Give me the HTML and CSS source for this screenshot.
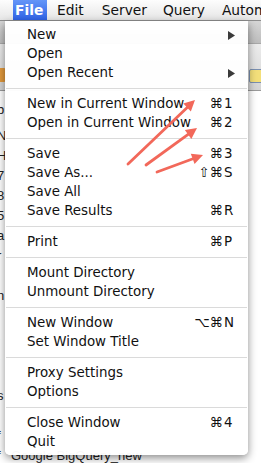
FILE: index.html
```html
<!DOCTYPE html>
<html>
<head>
<meta charset="utf-8">
<link rel="stylesheet" href="styles.css">
</head>
<body>
<div class="screen">
  <div class="menubar">
    <span class="mtitle active">File</span>
    <span class="mtitle edit">Edit</span>
    <span class="mtitle server">Server</span>
    <span class="mtitle query">Query</span>
    <span class="mtitle autom">Automation</span>
  </div>
  <div class="window">
    <div class="toolbar">
      <div class="tb-top"></div>
      <div class="tb-main">
        <div class="tb-icon"></div>
        <div class="tb-folder"></div>
      </div>
    </div>
    <div class="list">
      <div class="lrow head"><span class="frag">b</span></div>
      <div class="lrow"><span class="frag">N</span></div>
      <div class="lrow"><span class="frag">H</span></div>
      <div class="lrow"><span class="frag">7</span></div>
      <div class="lrow"><span class="frag">8</span></div>
      <div class="lrow"><span class="frag">5</span></div>
      <div class="lrow"><span class="frag">a</span></div>
      <div class="lrow"><span class="frag">r</span></div>
      <div class="lrow"><span class="frag"></span></div>
      <div class="lrow"><span class="frag">n</span></div>
      <div class="lrow"><span class="frag"></span></div>
      <div class="lrow"><span class="frag">.</span></div>
      <div class="lrow"><span class="frag">.</span></div>
      <div class="lrow"><span class="frag"></span></div>
      <div class="lrow"><span class="frag">s</span></div>
      <div class="lrow"><span class="frag"></span></div>
      <div class="lrow"><span class="frag">f</span></div>
      <div class="lrow last"><span class="frag">f</span><span class="ltext">Google BigQuery_new</span></div>
    </div>
  </div>

  <div class="menu">
    <div class="item"><span class="label">New</span><svg class="sub" width="7" height="9" viewBox="0 0 7 9"><polygon points="0,0 7,4.5 0,9"/></svg></div>
    <div class="item"><span class="label">Open</span></div>
    <div class="item"><span class="label">Open Recent</span><svg class="sub" width="7" height="9" viewBox="0 0 7 9"><polygon points="0,0 7,4.5 0,9"/></svg></div>
    <div class="sep"></div>
    <div class="item"><span class="label">New in Current Window</span><span class="sc"><span class="mods">⌘</span><span class="key">1</span></span></div>
    <div class="item"><span class="label">Open in Current Window</span><span class="sc"><span class="mods">⌘</span><span class="key">2</span></span></div>
    <div class="sep"></div>
    <div class="item"><span class="label">Save</span><span class="sc"><span class="mods">⌘</span><span class="key">3</span></span></div>
    <div class="item"><span class="label">Save As...</span><span class="sc"><span class="mods">⇧⌘</span><span class="key">S</span></span></div>
    <div class="item"><span class="label">Save All</span></div>
    <div class="item"><span class="label">Save Results</span><span class="sc"><span class="mods">⌘</span><span class="key">R</span></span></div>
    <div class="sep"></div>
    <div class="item"><span class="label">Print</span><span class="sc"><span class="mods">⌘</span><span class="key">P</span></span></div>
    <div class="sep"></div>
    <div class="item"><span class="label">Mount Directory</span></div>
    <div class="item"><span class="label">Unmount Directory</span></div>
    <div class="sep"></div>
    <div class="item"><span class="label">New Window</span><span class="sc"><span class="mods">⌥⌘</span><span class="key">N</span></span></div>
    <div class="item"><span class="label">Set Window Title</span></div>
    <div class="sep"></div>
    <div class="item"><span class="label">Proxy Settings</span></div>
    <div class="item"><span class="label">Options</span></div>
    <div class="sep"></div>
    <div class="item"><span class="label">Close Window</span><span class="sc"><span class="mods">⌘</span><span class="key">4</span></span></div>
    <div class="item"><span class="label">Quit</span></div>
  </div>

  <svg class="arrows" width="261" height="463" viewBox="0 0 261 463">
    <g stroke="#f2685a" stroke-width="2.8" stroke-linecap="round" fill="none">
      <line x1="128" y1="164" x2="187.5" y2="107.2"/>
      <line x1="146" y1="165" x2="188.5" y2="134.2"/>
      <line x1="157" y1="172" x2="193" y2="158.7"/>
    </g>
    <g fill="#f2685a">
      <polygon points="195,100 190.84,111.58 183.24,103.62"/>
      <polygon points="197,128 191.33,138.91 184.87,130.01"/>
      <polygon points="203,155 194.59,163.97 190.77,153.65"/>
    </g>
  </svg>
</div>
</body>
</html>
```

FILE: styles.css
```css
html, body {
  margin: 0;
  padding: 0;
}
body {
  width: 261px;
  height: 463px;
  overflow: hidden;
  background: #ffffff;
  font-family: "DejaVu Sans", "Liberation Sans", sans-serif;
}
.screen {
  position: relative;
  width: 261px;
  height: 463px;
  overflow: hidden;
}

/* menu bar */
.menubar {
  height: 20px;
  border-bottom: 1px solid #8e8e8e;
  background: linear-gradient(#fdfdfd, #e6e6e6);
  display: flex;
  align-items: stretch;
  font-size: 13.8px;
  color: #111;
  white-space: nowrap;
}
.mtitle {
  line-height: 21px;
  flex: none;
}
.mtitle.active {
  margin-left: 13px;
  width: 34px;
  padding-left: 2px;
  box-sizing: border-box;
  color: #fff;
  font-weight: bold;
  background: linear-gradient(#6496f8, #2f62e6);
}
.mtitle.edit { margin-left: 10px; }
.mtitle.server { margin-left: 18px; }
.mtitle.query { margin-left: 16px; }
.mtitle.autom { margin-left: 17px; }

/* underlying window */
.toolbar {
  height: 69px;
  border-bottom: 1px solid #9a9a9a;
  display: flex;
  flex-direction: column;
}
.tb-top {
  height: 22px;
  background: linear-gradient(#d6d6d6, #bdbdbd);
  border-bottom: 1px solid #a8a8a8;
}
.tb-main {
  flex: 1;
  background: linear-gradient(#ececec, #d4d4d4);
  display: flex;
  align-items: center;
  justify-content: space-between;
}
.tb-icon {
  width: 10px;
  height: 14px;
  margin-left: -4px;
  margin-top: 16px;
  background: #e39a3c;
  border-radius: 2px;
}
.tb-folder {
  width: 12px;
  height: 12px;
  margin-right: -2px;
  margin-top: 18px;
  background: #f3df7a;
  border: 1px solid #7a8fb0;
  border-radius: 2px;
}
.list {
  padding-top: 8px;
  font-family: "Liberation Sans", sans-serif;
  font-size: 13px;
  color: #222;
}
.lrow {
  height: 20px;
  line-height: 20px;
  display: flex;
  white-space: nowrap;
}
.lrow.head {
  height: 27px;
  line-height: 22px;
}
.frag {
  width: 12px;
  margin-left: -3px;
}
.ltext {
  margin-left: 2px;
}

/* dropdown menu */
.menu {
  position: absolute;
  left: 5px;
  top: 21px;
  width: 243px;
  padding: 4px 0;
  background: rgba(255, 255, 255, 0.97);
  border-radius: 0 0 5px 5px;
  box-shadow: 0 3px 9px rgba(0, 0, 0, 0.45);
  font-size: 13.4px;
  color: #111;
}
.item {
  height: 19px;
  box-sizing: border-box;
  padding: 1px 12px 0 22px;
  line-height: 18px;
  display: flex;
  align-items: center;
  white-space: nowrap;
}
.label {
  flex: 1;
}
.sub {
  fill: #3a3a3a;
  margin-right: 1px;
}
.sc {
  display: flex;
}
.mods {
  text-align: right;
}
.key {
  width: 12px;
  margin-left: 1px;
}
.sep {
  height: 12px;
  display: flex;
  align-items: center;
}
.sep::before {
  content: "";
  flex: 1;
  height: 1px;
  margin: 0 1px;
  background: #dadada;
}

.arrows {
  position: absolute;
  left: 0;
  top: 0;
  pointer-events: none;
}
```
